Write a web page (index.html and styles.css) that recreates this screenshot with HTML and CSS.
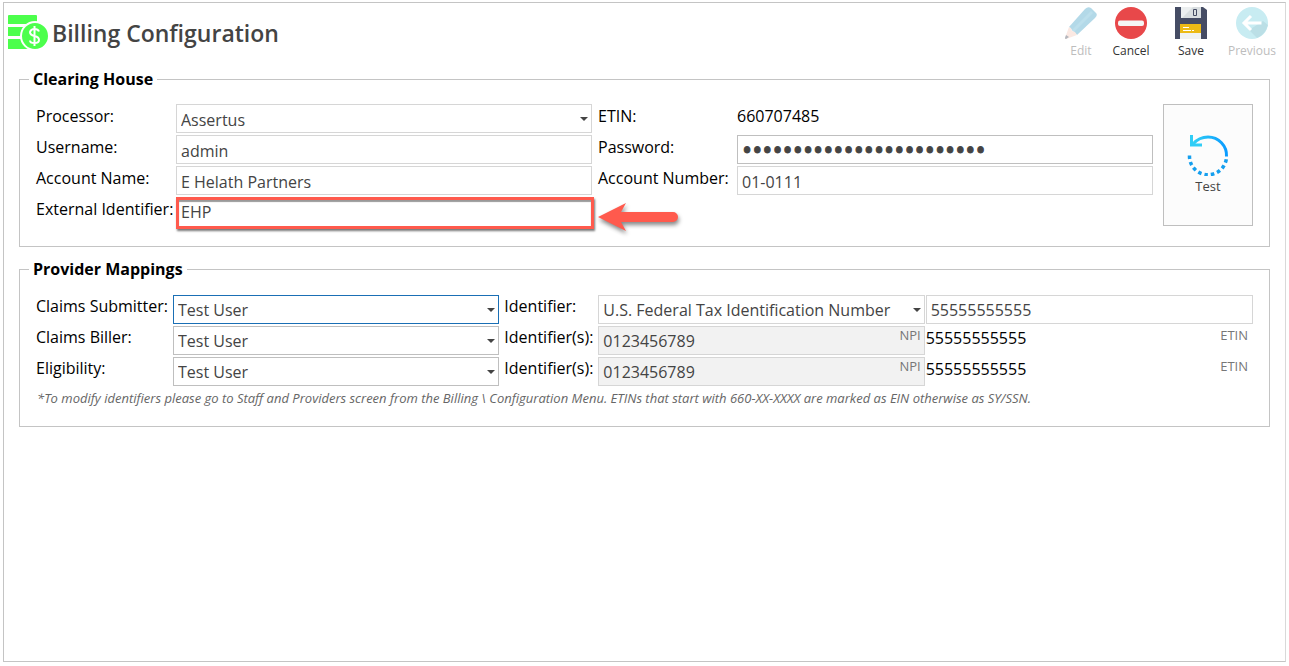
FILE: index.html
```html
<!DOCTYPE html>
<html lang="en">
<head>
<meta charset="utf-8">
<title>Billing Configuration</title>
<link rel="stylesheet" href="styles.css">
</head>
<body>
<main class="window">
  <header class="header">
    <svg class="logo" viewBox="0 0 40 35" aria-hidden="true">
      <path d="M0 1q0-1 1-1h27q1 0 1 1v8H0zM0 12h24v9H0zM0 24h24v10H0z" fill="#4cff4c"/>
      <circle cx="27" cy="21" r="14" fill="#4cff4c" stroke="#fff" stroke-width="2"/>
      <path d="M26.500 11v20M31 16.500q-1-2.500-4.500-2.500t-4.500 3q0 3 4.500 4t4.500 4-4.500 3-4.500-2.500" fill="none" stroke="#fff" stroke-width="2"/>
    </svg>
    <h1 class="title">Billing Configuration</h1>
    <nav class="toolbar">
      <button class="tool tool-edit" disabled>
        <svg class="tool-icon" viewBox="0 0 32 32" aria-hidden="true">
          <path d="M20 2q3-3 6-1l5 5q2 2-1 5L12 28 4 20z" fill="#b3d9e8"/>
          <path d="M8 24L27 5" stroke="#bcdfec" stroke-width="3"/>
          <path d="M4 20l2 1 1 3 3 1 2 3L1 32q-1 0-1-1z" fill="#fbe9e3"/>
          <path d="M1 28l3 2-3 2q-1 0-1-1z" fill="#b3b6bd"/>
        </svg>
        <span>Edit</span>
      </button>
      <button class="tool tool-cancel">
        <svg class="tool-icon" viewBox="0 0 32 32" aria-hidden="true">
          <circle cx="16" cy="16" r="16" fill="#e8484a"/>
          <rect x="3" y="13.500" width="26" height="5.500" rx="2" fill="#f5f5f5"/>
        </svg>
        <span>Cancel</span>
      </button>
      <button class="tool tool-save">
        <svg class="tool-icon" viewBox="0 0 32 32" aria-hidden="true">
          <path d="M0 0h28l4 3v29H0z" fill="#454c64"/>
          <path d="M6 0h20v11H6z" fill="#d9dee0"/>
          <path d="M6 0h12L7 11H6z" fill="#eceff0"/>
          <path d="M18.500 2.500h3v6h-3z" fill="#d9dee0" stroke="#454c64"/>
          <path d="M5 17h21v15H5z" fill="#f0f2f2"/>
          <path d="M5 17h21v9H5z" fill="#ecba16"/>
          <path d="M8 20.500h6M8 23.500h8M17 23.500h2" stroke="#fff"/>
        </svg>
        <span>Save</span>
      </button>
      <button class="tool tool-previous" disabled>
        <svg class="tool-icon" viewBox="0 0 32 32" aria-hidden="true">
          <circle cx="16" cy="16" r="16" fill="#c8ecf2"/>
          <path d="M13 23l8 8q8-3 11-13l-5-4z" fill="#bbdfe6"/>
          <path d="M25.500 16H9M15 9l-7 7 7 7" fill="none" stroke="#fff" stroke-width="3"/>
        </svg>
        <span>Previous</span>
      </button>
    </nav>
  </header>

  <fieldset class="group">
    <legend>Clearing House</legend>
    <div class="clearing">
      <label for="processor">Processor:</label>
      <div class="picker"><select id="processor" class="field"><option>Assertus</option></select></div>
      <label class="second" for="etin">ETIN:</label>
      <output id="etin" class="value">660707485</output>
      <button class="test">
        <svg class="test-icon" viewBox="0 0 42 42" aria-hidden="true">
          <defs>
            <linearGradient id="blue" x1="0" x2="1" y1="0" y2="0">
              <stop offset="0" stop-color="#32d0f5"/><stop offset="1" stop-color="#0a9bff"/>
            </linearGradient>
          </defs>
          <path d="M6 10Q12 3 21 3a18.500 18.500 0 0 1 18.500 19.500" fill="none" stroke="url(#blue)" stroke-width="3"/>
          <path d="M4.500 1v10H15" fill="none" stroke="#30cdf6" stroke-width="3"/>
          <path d="M2.500 21.500A18.500 18.500 0 0 0 39.500 23" fill="none" stroke="#159fee" stroke-width="3.500" stroke-dasharray="3.500 3"/>
        </svg>
        <span>Test</span>
      </button>

      <label for="username">Username:</label>
      <input id="username" class="field" type="text" value="admin">
      <label class="second" for="password">Password:</label>
      <input id="password" class="field strong password" type="password" value="abcdefghijklmnopqrstuvwx">

      <label for="account-name">Account Name:</label>
      <input id="account-name" class="field" type="text" value="E Helath Partners">
      <label class="second" for="account-number">Account Number:</label>
      <input id="account-number" class="field" type="text" value="01-0111">

      <label for="external">External Identifier:</label>
      <input id="external" class="field marked" type="text" value="EHP">
      <svg class="arrow" viewBox="0 0 88 36" aria-hidden="true">
        <path d="M2 20L30 6l-5 9h52a5 5 0 0 1 0 10H25l5 9z" fill="#ff5a4d"/>
      </svg>
    </div>
  </fieldset>

  <fieldset class="group group-mappings">
    <legend>Provider Mappings</legend>
    <div class="mappings">
      <label for="submitter">Claims Submitter:</label>
      <div class="picker"><select id="submitter" class="field active"><option>Test User</option></select></div>
      <label class="second" for="id-type">Identifier:</label>
      <div class="picker"><select id="id-type" class="field"><option>U.S. Federal Tax Identification Number</option></select></div>
      <input class="field" type="text" value="55555555555" aria-label="Identifier number">

      <label for="biller">Claims Biller:</label>
      <div class="picker"><select id="biller" class="field strong"><option>Test User</option></select></div>
      <label class="second" for="biller-npi">Identifier(s):</label>
      <div class="tagged"><input id="biller-npi" class="field locked" type="text" value="0123456789" readonly><span class="tag">NPI</span></div>
      <div class="tagged value"><span>55555555555</span><span class="tag">ETIN</span></div>

      <label for="eligibility">Eligibility:</label>
      <div class="picker"><select id="eligibility" class="field strong"><option>Test User</option></select></div>
      <label class="second" for="eligibility-npi">Identifier(s):</label>
      <div class="tagged"><input id="eligibility-npi" class="field locked" type="text" value="0123456789" readonly><span class="tag">NPI</span></div>
      <div class="tagged value"><span>55555555555</span><span class="tag">ETIN</span></div>
    </div>
    <p class="note">*To modify identifiers please go to Staff and Providers screen from the Billing \ Configuration Menu. ETINs that start with 660-XX-XXXX are marked as EIN otherwise as SY/SSN.</p>
  </fieldset>
</main>
</body>
</html>
```

FILE: styles.css
```css
* { box-sizing: border-box; }

body {
  margin: 0;
  padding: 2px 3px 4px;
  min-height: 100vh;
  display: flex;
  background: #fff;
  color: #000;
  font: 16px/24px "Open Sans", "Noto Sans", sans-serif;
}

button, input, select { font: inherit; color: #444; }

.window {
  flex: 1;
  border: 1px solid #c4c4c4;
  border-right-color: #d9d9d9;
}

.header {
  display: flex;
  align-items: flex-start;
  height: 64px;
  padding: 4px 4px 0 4px;
}

.logo { width: 40px; height: 35px; margin-top: 8px; }

.title {
  flex: 1;
  margin: 10px 0 0 4px;
  color: #444;
  font-size: 23px;
  line-height: 32px;
  font-weight: 600;
}

.toolbar { display: flex; }

.tool {
  display: flex;
  flex-direction: column;
  align-items: center;
  padding: 0;
  border: 0;
  background: none;
  color: #333;
  font-size: 12px;
  line-height: 16px;
  gap: 4px;
}
.tool:disabled { color: #bdbdbd; }
.tool-icon { width: 32px; height: 32px; }
.tool-edit { width: 44px; }
.tool-cancel { width: 56px; }
.tool-save { width: 64px; }
.tool-previous { width: 58px; }

.group {
  margin: 0 15px;
  padding: 13px 16px 18px;
  border: 1px solid #c4c4c4;
  min-width: 0;
}
.group-mappings { margin-top: 10px; padding-top: 14px; }

legend {
  margin-left: -7px;
  padding: 0 4px;
  font-weight: 700;
}

.clearing {
  display: grid;
  grid-template-columns: 140px 1fr 145px 1fr 100px;
  grid-auto-rows: 31px;
}

.mappings {
  display: grid;
  grid-template-columns: 137px 1fr 98px 1fr 1fr;
  grid-auto-rows: 31px;
}

label { white-space: nowrap; }
.clearing .second { padding-left: 6px; }
.mappings .second { padding-left: 4px; }
.mappings label { line-height: 22px; }

.field {
  display: block;
  width: 100%;
  height: 29px;
  margin: 0;
  padding: 2px 4px 0;
  border: 1px solid #d6d6d6;
  border-radius: 0;
  background: #fff;
  outline: 0;
  appearance: none;
}
.mappings .field { padding-top: 0; }
.strong { border-color: #bfbfbf; }
.active { border-color: #1a6fb5; }
.locked { background: #f2f2f2; }

.picker, .tagged { position: relative; }
.mappings .picker, .mappings .tagged { margin-right: 1px; }

.picker::after {
  content: "";
  position: absolute;
  right: 4px;
  top: 13px;
  border: 4px solid transparent;
  border-top-color: #444;
  border-bottom: 0;
  pointer-events: none;
}

.tag {
  position: absolute;
  right: 4px;
  top: 0;
  color: #777;
  font-size: 13px;
  line-height: 18px;
}

.password {
  padding-top: 0;
  font-size: 27px;
  -webkit-text-stroke: 1px #444;
}

.marked {
  width: calc(100% + 2px);
  height: 32px;
  padding: 0 2px 3px;
  border: 3px solid #ff5a4d;
  box-shadow: 1px 2px 2px #777, inset 0 2px 1px #999;
}

.arrow {
  width: 88px;
  height: 36px;
  margin-left: 4px;
  filter: drop-shadow(1px 3px 2px #888);
}

.test {
  grid-column: 5;
  grid-row: 1 / 5;
  height: 122px;
  margin-left: 10px;
  padding: 0 0 2px;
  display: flex;
  flex-direction: column;
  align-items: center;
  justify-content: center;
  gap: 2px;
  border: 1px solid #bfbfbf;
  background: #fcfcfc;
  font-size: 13px;
  line-height: 16px;
}
.test-icon { width: 42px; height: 42px; }

.note {
  margin: 0 1px;
  color: #666;
  font-size: 13px;
  line-height: 20px;
  font-style: italic;
}
```
